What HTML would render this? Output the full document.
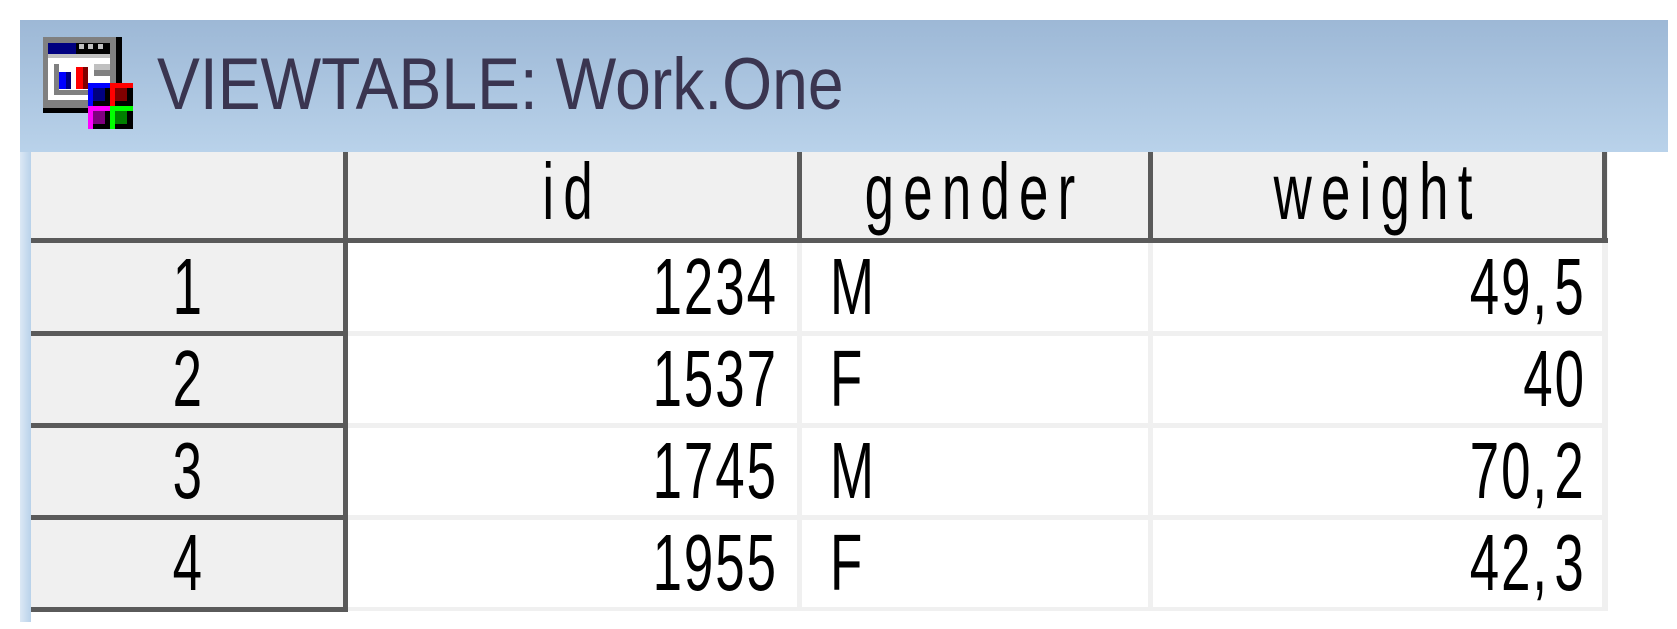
<!DOCTYPE html>
<html><head><meta charset="utf-8"><style>
html,body{margin:0;padding:0;background:#fff;width:1677px;height:629px;overflow:hidden;position:relative;font-family:"Liberation Sans",sans-serif}
div{position:absolute;box-sizing:border-box}
.t{white-space:nowrap;color:#000;font-size:80px;line-height:80px}
.n{letter-spacing:3px}
.h{letter-spacing:14px}
.c{margin-right:8px}
</style></head><body>
<div style="left:20px;top:20px;width:1648px;height:132px;background:linear-gradient(#9db8d6,#b9d2ea)"></div>
<div style="left:20px;top:152px;width:11px;height:470px;background:linear-gradient(90deg,#dce8f5,#b9d2ea)"></div>
<!-- icon -->
<div style="left:43px;top:37px;width:73px;height:71px;background:#808080"></div>
<div style="left:116px;top:37px;width:6px;height:76px;background:#000"></div>
<div style="left:43px;top:108px;width:79px;height:5px;background:#000"></div>
<div style="left:48px;top:43px;width:28px;height:11px;background:#000080"></div>
<div style="left:76px;top:43px;width:34px;height:11px;background:#000"></div>
<div style="left:79px;top:44px;width:5px;height:5px;background:#c0c0c0"></div>
<div style="left:88px;top:44px;width:5px;height:5px;background:#c0c0c0"></div>
<div style="left:98px;top:44px;width:5px;height:5px;background:#c0c0c0"></div>
<div style="left:48px;top:54px;width:62px;height:4px;background:#c0c0c0"></div>
<div style="left:48px;top:58px;width:62px;height:42px;background:#fff"></div>
<div style="left:54px;top:64px;width:5px;height:30px;background:#808080"></div>
<div style="left:54px;top:90px;width:40px;height:5px;background:#808080"></div>
<div style="left:94px;top:64px;width:16px;height:6px;background:#c0c0c0"></div>
<div style="left:94px;top:70px;width:16px;height:6px;background:#808080"></div>
<div style="left:59px;top:72px;width:7px;height:17px;background:#0000ff"></div>
<div style="left:66px;top:72px;width:5px;height:17px;background:#000080"></div>
<div style="left:76px;top:67px;width:7px;height:22px;background:#ff0000"></div>
<div style="left:83px;top:67px;width:5px;height:22px;background:#800000"></div>
<div style="left:88px;top:83px;width:45px;height:46px;background:#000"></div>
<div style="left:88px;top:83px;width:22px;height:5px;background:#0000ff"></div>
<div style="left:88px;top:83px;width:5px;height:23px;background:#0000ff"></div>
<div style="left:93px;top:88px;width:12px;height:13px;background:#000080"></div>
<div style="left:110px;top:83px;width:23px;height:5px;background:#ff0000"></div>
<div style="left:110px;top:83px;width:5px;height:23px;background:#ff0000"></div>
<div style="left:115px;top:88px;width:12px;height:13px;background:#800000"></div>
<div style="left:88px;top:106px;width:22px;height:5px;background:#ff00ff"></div>
<div style="left:88px;top:106px;width:5px;height:23px;background:#ff00ff"></div>
<div style="left:93px;top:111px;width:12px;height:13px;background:#800080"></div>
<div style="left:110px;top:106px;width:23px;height:5px;background:#00ff00"></div>
<div style="left:110px;top:106px;width:5px;height:23px;background:#00ff00"></div>
<div style="left:115px;top:111px;width:12px;height:13px;background:#008000"></div>
<div class="t" style="left:157px;top:48px;font-size:73px;line-height:73px;color:#3a3550;transform:scaleX(0.88);transform-origin:0 0">VIEWTABLE: Work.One</div>

<div style="left:31px;top:152px;width:1577px;height:459px;background:#f0f0f0"></div>
<div style="left:348px;top:243px;width:449px;height:88px;background:#fff"></div>
<div style="left:802px;top:243px;width:346px;height:88px;background:#fff"></div>
<div style="left:1153px;top:243px;width:449px;height:88px;background:#fff"></div>
<div style="left:348px;top:336px;width:449px;height:87px;background:#fff"></div>
<div style="left:802px;top:336px;width:346px;height:87px;background:#fff"></div>
<div style="left:1153px;top:336px;width:449px;height:87px;background:#fff"></div>
<div style="left:348px;top:428px;width:449px;height:87px;background:#fff"></div>
<div style="left:802px;top:428px;width:346px;height:87px;background:#fff"></div>
<div style="left:1153px;top:428px;width:449px;height:87px;background:#fff"></div>
<div style="left:348px;top:520px;width:449px;height:87px;background:#fff"></div>
<div style="left:802px;top:520px;width:346px;height:87px;background:#fff"></div>
<div style="left:1153px;top:520px;width:449px;height:87px;background:#fff"></div>
<div style="left:31px;top:238px;width:1577px;height:5px;background:#5a5a5a"></div>
<div style="left:343px;top:152px;width:5px;height:459px;background:#5a5a5a"></div>
<div style="left:797px;top:152px;width:5px;height:86px;background:#5a5a5a"></div>
<div style="left:1148px;top:152px;width:5px;height:86px;background:#5a5a5a"></div>
<div style="left:1602px;top:152px;width:5px;height:86px;background:#5a5a5a"></div>
<div style="left:31px;top:331px;width:317px;height:5px;background:#5a5a5a"></div>
<div style="left:31px;top:423px;width:317px;height:5px;background:#5a5a5a"></div>
<div style="left:31px;top:515px;width:317px;height:5px;background:#5a5a5a"></div>
<div style="left:31px;top:607px;width:317px;height:5px;background:#5a5a5a"></div>

<div class="t h" style="left:348px;width:449px;top:152px;text-align:center"><span style="display:inline-block;transform:scaleX(0.66)">id</span></div>
<div class="t h" style="left:802px;width:346px;top:152px;text-align:center"><span style="display:inline-block;transform:scaleX(0.66)">gender</span></div>
<div class="t h" style="left:1153px;width:449px;top:152px;text-align:center"><span style="display:inline-block;transform:scaleX(0.66)">weight</span></div>

<div class="t" style="left:31px;width:312px;top:247px;text-align:center"><span style="display:inline-block;transform:scaleX(0.66)">1</span></div>
<div class="t" style="left:31px;width:312px;top:339px;text-align:center"><span style="display:inline-block;transform:scaleX(0.66)">2</span></div>
<div class="t" style="left:31px;width:312px;top:431px;text-align:center"><span style="display:inline-block;transform:scaleX(0.66)">3</span></div>
<div class="t" style="left:31px;width:312px;top:523px;text-align:center"><span style="display:inline-block;transform:scaleX(0.66)">4</span></div>

<div class="t n" style="right:899px;top:247px;transform:scaleX(0.66);transform-origin:100% 0">1234</div>
<div class="t n" style="right:899px;top:339px;transform:scaleX(0.66);transform-origin:100% 0">1537</div>
<div class="t n" style="right:899px;top:431px;transform:scaleX(0.66);transform-origin:100% 0">1745</div>
<div class="t n" style="right:899px;top:523px;transform:scaleX(0.66);transform-origin:100% 0">1955</div>
<div class="t" style="left:830px;top:247px;transform:scaleX(0.66);transform-origin:0 0">M</div>
<div class="t" style="left:830px;top:339px;transform:scaleX(0.66);transform-origin:0 0">F</div>
<div class="t" style="left:830px;top:431px;transform:scaleX(0.66);transform-origin:0 0">M</div>
<div class="t" style="left:830px;top:523px;transform:scaleX(0.66);transform-origin:0 0">F</div>
<div class="t n" style="right:91px;top:247px;transform:scaleX(0.66);transform-origin:100% 0">49,<span class="c"></span>5</div>
<div class="t n" style="right:91px;top:339px;transform:scaleX(0.66);transform-origin:100% 0">40</div>
<div class="t n" style="right:91px;top:431px;transform:scaleX(0.66);transform-origin:100% 0">70,<span class="c"></span>2</div>
<div class="t n" style="right:91px;top:523px;transform:scaleX(0.66);transform-origin:100% 0">42,<span class="c"></span>3</div>
</body></html>
